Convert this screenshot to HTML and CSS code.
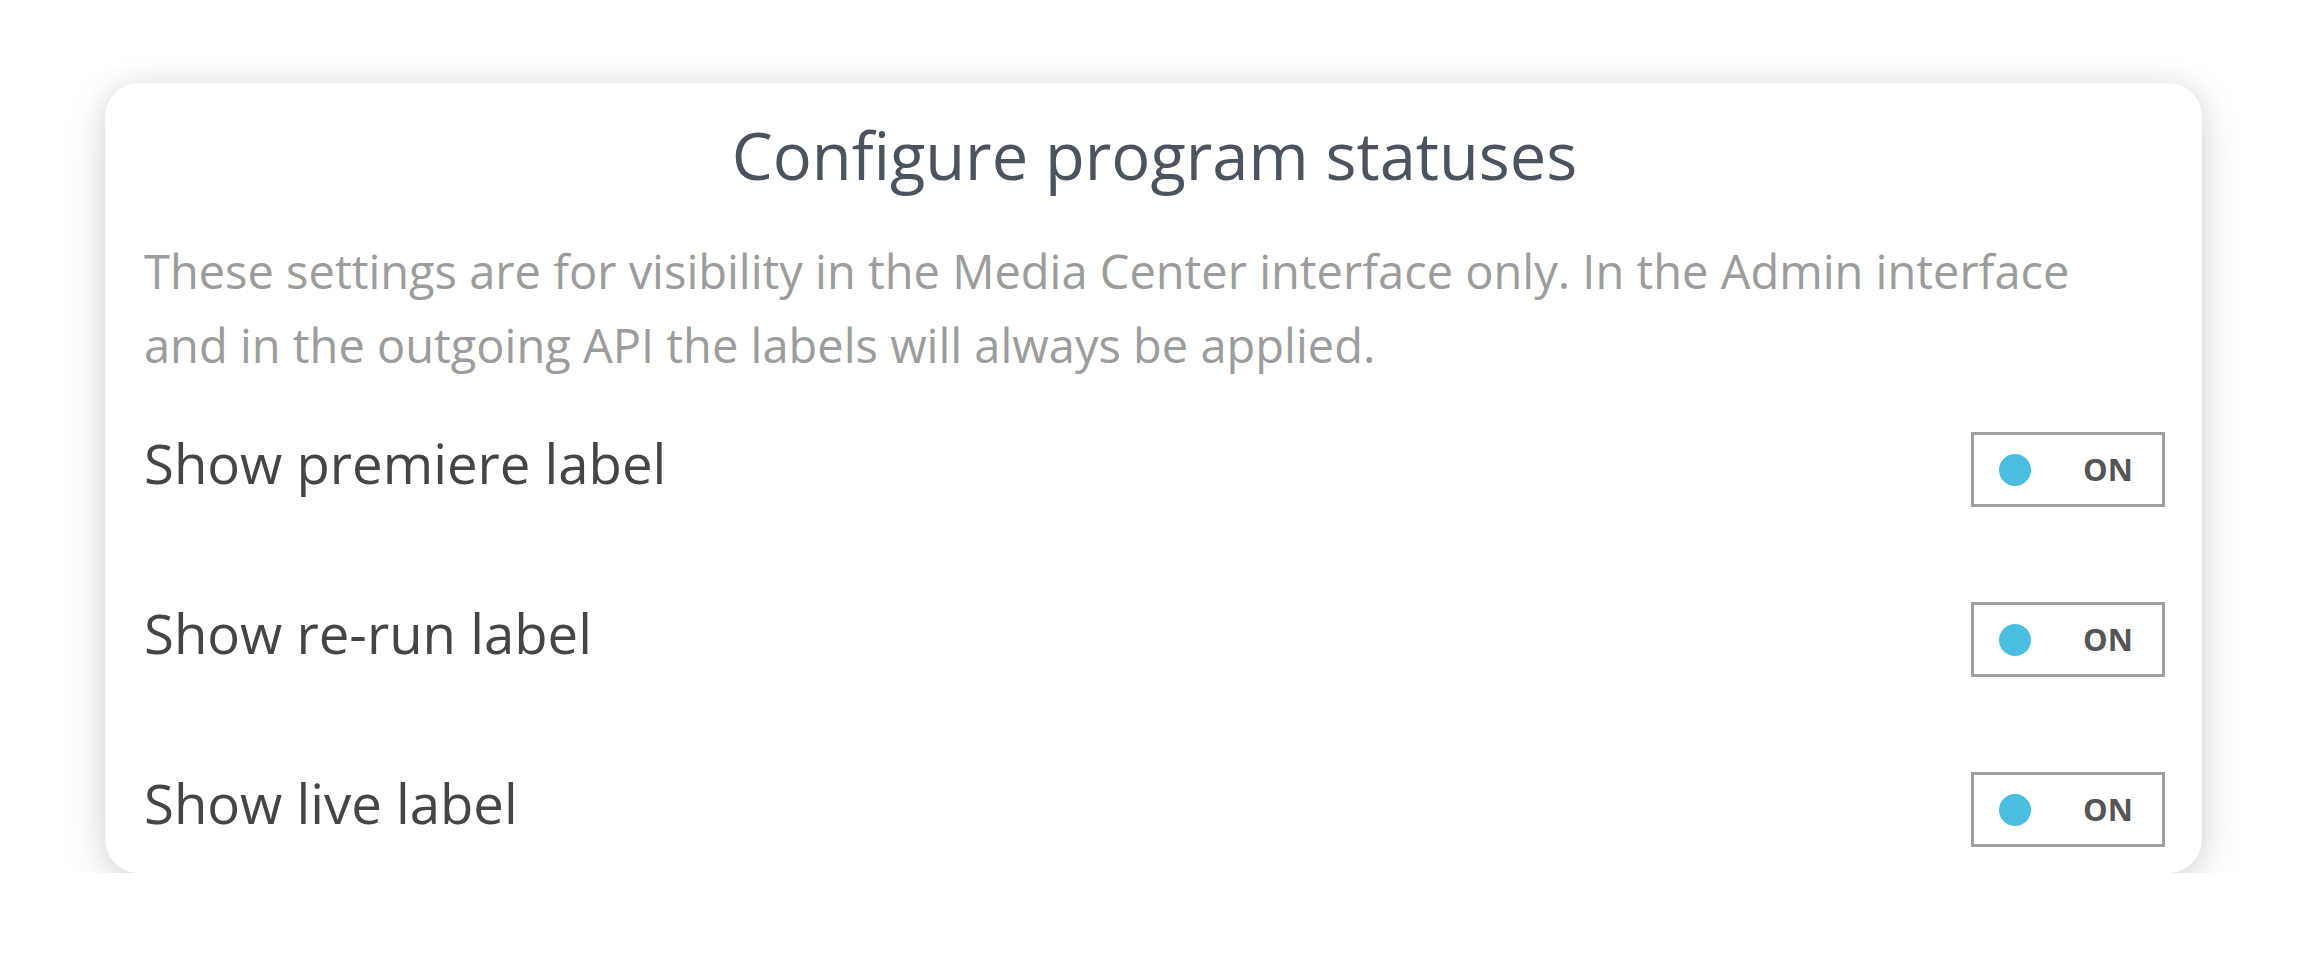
FILE: index.html
```html
<!DOCTYPE html>
<html lang="en">
<head>
<meta charset="utf-8">
<title>Configure program statuses</title>
<link rel="stylesheet" href="styles.css">
</head>
<body>
<div class="card">
  <h1 class="title">Configure program statuses</h1>
  <p class="desc">These settings are for visibility in the Media Center interface only. In the Admin interface and in the outgoing API the labels will always be applied.</p>
  <div class="rows">
    <div class="row">
      <span class="label">Show premiere label</span>
      <div class="toggle"><span class="dot"></span><span class="state">ON</span></div>
    </div>
    <div class="row">
      <span class="label">Show re-run label</span>
      <div class="toggle"><span class="dot"></span><span class="state">ON</span></div>
    </div>
    <div class="row">
      <span class="label">Show live label</span>
      <div class="toggle"><span class="dot"></span><span class="state">ON</span></div>
    </div>
  </div>
</div>
</body>
</html>
```
FILE: styles.css
```css
html, body {
  margin: 0;
  padding: 0;
  background: #ffffff;
}
body {
  font-family: "Open Sans", "Noto Sans", sans-serif;
  padding: 83px 0 0 105px;
}
.card {
  box-sizing: border-box;
  width: 2097px;
  background: #ffffff;
  border-radius: 34px;
  box-shadow: 0 12px 46px rgba(0, 0, 0, 0.13), 0 0 26px rgba(0, 0, 0, 0.08);
  padding: 32px 37px 26px 39px;
  display: flex;
  flex-direction: column;
}
.title {
  margin: 0;
  font-size: 65px;
  line-height: 80px;
  font-weight: 400;
  color: #4b5260;
  text-align: center;
}
.desc {
  margin: 39px 0 0 0;
  font-size: 47px;
  line-height: 74px;
  color: #9c9c9c;
}
.rows {
  margin-top: 50px;
  display: flex;
  flex-direction: column;
  gap: 95px;
}
.row {
  display: flex;
  align-items: center;
  justify-content: space-between;
  height: 75px;
}
.label {
  font-size: 54.5px;
  line-height: 60px;
  color: #454545;
  margin-bottom: 14px;
}
.toggle {
  box-sizing: border-box;
  width: 194px;
  height: 75px;
  border: 3px solid #9f9f9f;
  display: flex;
  align-items: center;
  padding-left: 25px;
  gap: 52px;
}
.dot {
  width: 32px;
  height: 32px;
  border-radius: 50%;
  background: #4bbde0;
  flex: none;
}
.state {
  font-size: 31px;
  font-weight: 700;
  color: #555555;
  line-height: 1;
}
```
